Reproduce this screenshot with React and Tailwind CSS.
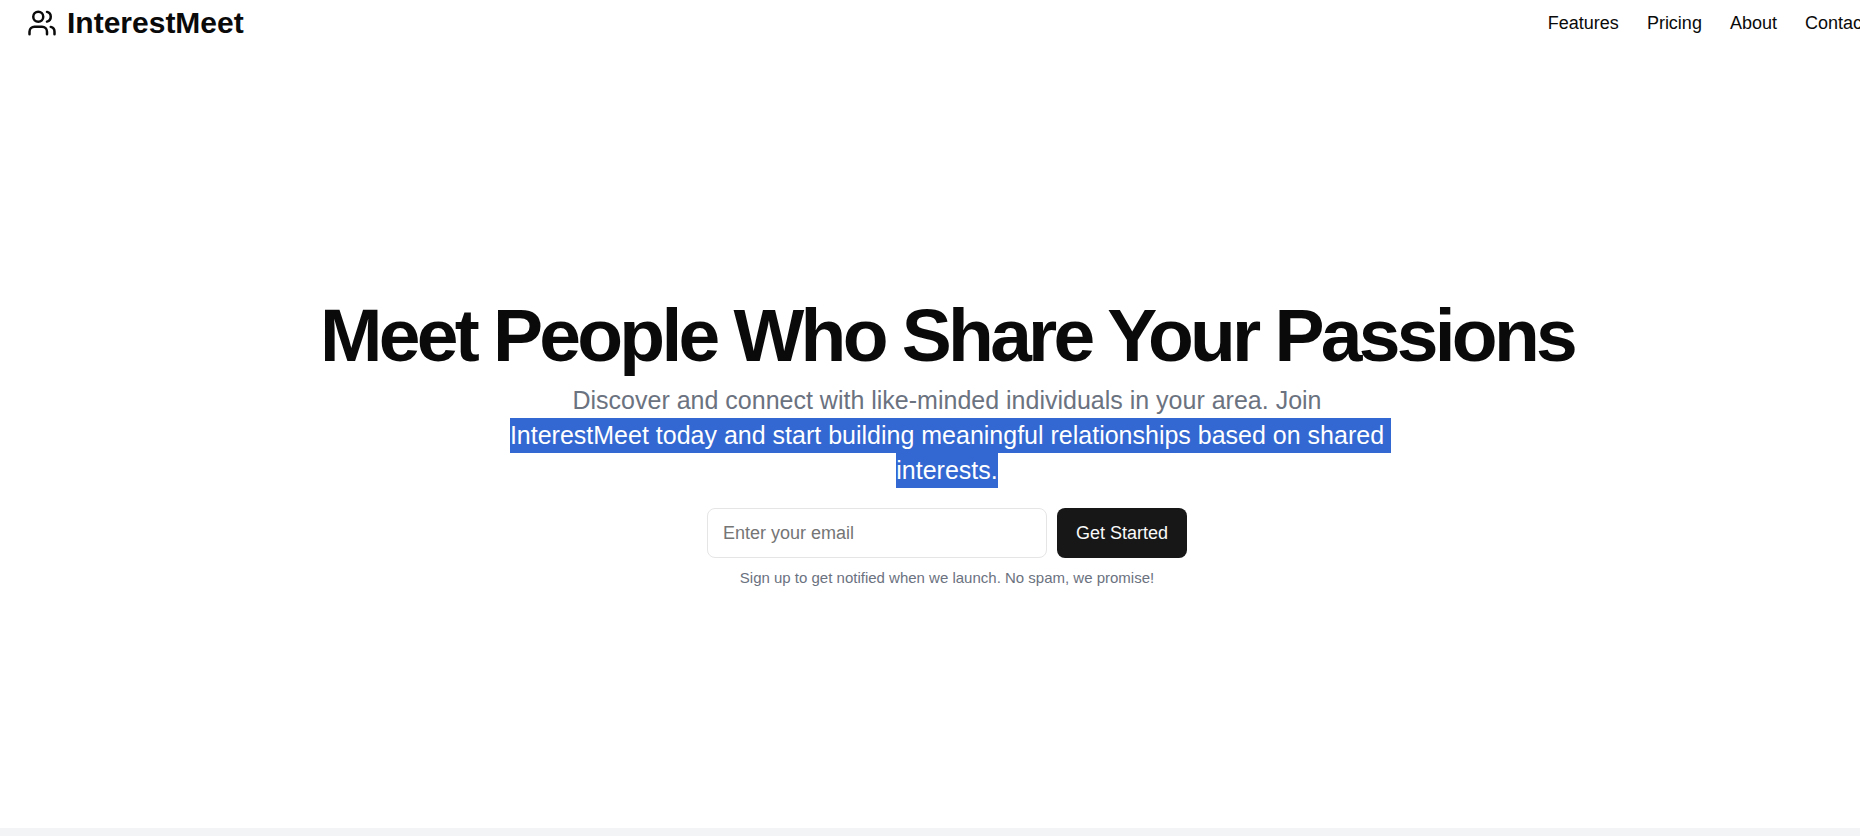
import React, { useState } from 'react';
import { Users } from 'lucide-react';

const links = [
  { label: 'Features', href: '#features' },
  { label: 'Pricing', href: '#pricing' },
  { label: 'About', href: '#about' },
  { label: 'Contact', href: '#contact' },
];

function Header() {
  return (
    <header className="flex h-[58px] items-center px-[27px] pb-3">
      <a href="#home" className="flex items-center gap-[10px]">
        <Users size={30} />
        <span className="text-[30px] leading-[40px] font-bold">InterestMeet</span>
      </a>
      <nav className="ml-auto flex gap-7">
        {links.map((link) => (
          <a key={link.href} href={link.href} className="text-lg leading-[26px] hover:underline">
            {link.label}
          </a>
        ))}
      </nav>
    </header>
  );
}

function SignupForm() {
  const [email, setEmail] = useState('');

  return (
    <div className="w-full max-w-[480px] space-y-[10px]">
      <form className="flex gap-[10px]" onSubmit={(e) => e.preventDefault()}>
        <input
          type="email"
          aria-label="Email address"
          placeholder="Enter your email"
          value={email}
          onChange={(e) => setEmail(e.target.value)}
          className="h-[50px] min-w-0 flex-1 rounded-lg border border-[#e5e5e5] bg-white px-[15px] text-lg placeholder:text-[#757575]"
        />
        <button
          type="submit"
          className="h-[50px] w-[130px] rounded-lg bg-[#171717] text-lg text-[#fafafa] hover:bg-[#2b2b2b]"
        >
          Get Started
        </button>
      </form>
      <p className="text-[15px] leading-5 text-[#6b7280]">
        Sign up to get notified when we launch. No spam, we promise!
      </p>
    </div>
  );
}

function Hero() {
  return (
    <section className="flex flex-col items-center px-8 py-60 text-center">
      <h1 className="mb-[10px] text-[75px] leading-none font-bold tracking-tighter">
        Meet People Who Share Your Passions
      </h1>
      <p className="mb-5 max-w-[880px] text-[25px] leading-[35px] whitespace-pre-wrap text-[#6b7280]">
        Discover and connect with like-minded individuals in your area. Join{' '}
        <span className="bg-[#3367d1] pt-[3px] pb-1 text-white">
          InterestMeet today and start building meaningful relationships based on shared interests.
        </span>
      </p>
      <SignupForm />
    </section>
  );
}

export default function App() {
  return (
    <div className="min-h-screen overflow-x-hidden bg-white font-['Liberation_Sans',Arial,sans-serif] text-[#0a0a0a]">
      <div className="w-[calc(100%+34px)]">
        <Header />
        <main>
          <Hero />
          <section id="features" className="h-2 bg-[#f3f4f6]" />
        </main>
      </div>
    </div>
  );
}
